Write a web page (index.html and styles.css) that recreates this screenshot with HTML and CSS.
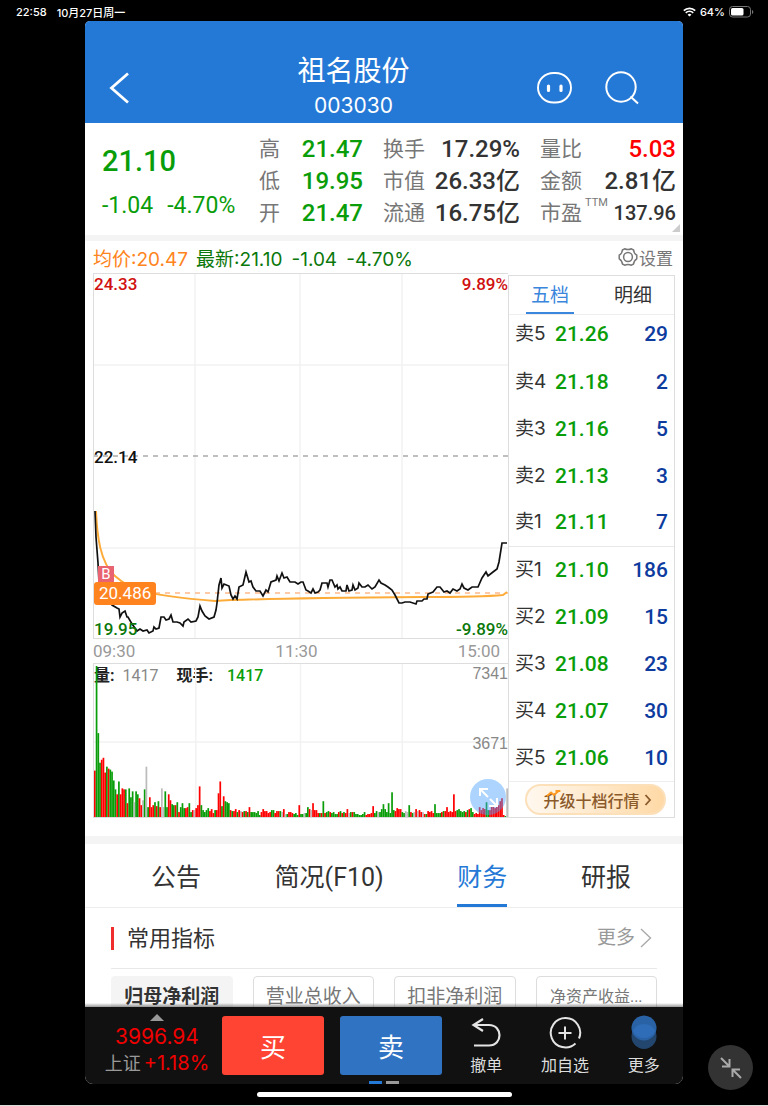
FILE: index.html
```html
<!DOCTYPE html>
<html lang="zh-CN">
<head>
  <meta charset="UTF-8">
  <title>祖名股份 003030</title>
  <meta name="viewport" content="width=device-width, initial-scale=1.0">
  <link rel="stylesheet" href="styles.css">
</head>
<body>
<div class="statusbar">
  <span>22:58</span>
  <span class="date">10月27日周一</span>
  <svg class="wifi" width="13" height="10" viewBox="0 0 13 10" fill="none" stroke="#fff" stroke-width="1.7">
    <path d="M0.8 3.6a8.2 8.2 0 0 1 11.4 0M2.8 5.8a5.2 5.2 0 0 1 7.4 0"/>
    <path d="M6.5 9.6L4.6 7.7a2.7 2.7 0 0 1 3.8 0z" fill="#fff" stroke="none"/>
  </svg>
  <span class="percent">64%</span>
  <svg width="25" height="12" viewBox="0 0 25 12">
    <rect x="0.5" y="0.5" width="21" height="10.5" rx="3" fill="none" stroke="#777"/>
    <rect x="2" y="2" width="12.5" height="7.5" rx="1.5" fill="#fff"/>
    <path d="M23 4v4q1.3-.6 1.3-2T23 4z" fill="#777"/>
  </svg>
</div>

<div class="app">
  <header>
    <a href="#" class="back" aria-label="返回">
      <svg width="24" height="32" viewBox="0 0 24 32" fill="none" stroke="#fff" stroke-width="2.8"><path d="M20 1.500L3.500 16 20 30.500"/></svg>
    </a>
    <div class="title">
      <h1>祖名股份</h1>
      <p>003030</p>
    </div>
    <nav class="tools">
      <a href="#" aria-label="助手">
        <svg width="36" height="32" viewBox="0 0 36 32" fill="none" stroke="#fff">
          <rect x="1" y="1" width="33" height="29.5" rx="15.5" ry="14.7" stroke-width="1.9"/>
          <path d="M11.5 14v4.500M24 14v4.500" stroke-width="3.2" stroke-linecap="round"/>
        </svg>
      </a>
      <a href="#" aria-label="搜索">
        <svg width="36" height="36" viewBox="0 0 36 36" fill="none" stroke="#fff" stroke-width="2">
          <circle cx="17" cy="17" r="14.7"/><path d="M26.5 26.5l7.5 7"/>
        </svg>
      </a>
    </nav>
  </header>

  <section class="quote">
    <div class="price">
      <strong>21.10</strong>
      <p><span>-1.04</span><span>-4.70%</span></p>
    </div>
    <dl class="stats">
      <div><dt>高</dt><dd class="down">21.47</dd></div>
      <div><dt>低</dt><dd class="down">19.95</dd></div>
      <div><dt>开</dt><dd class="down">21.47</dd></div>
    </dl>
    <dl class="stats">
      <div><dt>换手</dt><dd>17.29%</dd></div>
      <div><dt>市值</dt><dd>26.33亿</dd></div>
      <div><dt>流通</dt><dd>16.75亿</dd></div>
    </dl>
    <dl class="stats">
      <div><dt>量比</dt><dd class="up">5.03</dd></div>
      <div><dt>金额</dt><dd>2.81亿</dd></div>
      <div><dt>市盈<sup>TTM</sup></dt><dd class="small">137.96</dd></div>
    </dl>
  </section>

  <section class="market">
    <div class="info">
      <span class="avg">均价:20.47</span>
      <p class="last"><span>最新:21.10</span><span>-1.04</span><span>-4.70%</span></p>
      <a href="#" class="settings">
        <svg width="20" height="20" viewBox="0 0 20 20" fill="none" stroke="#777" stroke-width="1.5" stroke-linejoin="round">
          <path d="M6.6 1.8Q10 3.4 13.4 1.8L15.6 3Q15.8 6.4 18.8 8.2V11.8Q15.8 13.6 15.6 17L13.4 18.2Q10 16.6 6.6 18.2L4.4 17Q4.2 13.6 1.2 11.8V8.2Q4.2 6.4 4.4 3z"/>
          <circle cx="10" cy="10" r="4.4"/>
        </svg>设置
      </a>
    </div>

    <div class="board">
      <div class="charts">
        <div class="trend">
          <svg viewBox="1 1 414 364" preserveAspectRatio="none">
            <path class="grid" d="M0 92H415M0 275H415M102 0V366M207 0V366M309 0V366"/>
            <path class="mid" d="M0 183H415"/>
            <path class="cost" d="M62 320H415"/>
            <path class="avgline" d="M3 238C4 262 7 290 22 303S48 322 122 328C150 326 207 325 330 324Q390 324 410 322L414 319"/>
            <polyline class="priceline" points="2,238 3,264 5,290 6,309 12,322 19,332 24,335 26,336 27,344 29,340 32,338 34,344 35,344 39,351 42,355 44,358 47,356 50,358 54,357 56,360 60,358 61,354 63,356 66,355 68,344 71,344 73,347 76,346 78,342 80,349 84,349 87,350 90,353 91,349 95,346 98,349 103,348 105,344 107,333 109,338 112,343 116,346 121,344 123,337 124,330 126,312 128,305 129,315 131,311 136,313 138,322 140,326 142,323 144,326 146,314 150,312 153,299 156,309 158,308 160,314 163,318 167,318 170,323 173,317 175,319 178,309 183,307 184,303 186,308 189,300 191,305 194,304 197,309 202,309 205,311 208,309 210,309 213,317 215,318 218,320 220,316 222,320 225,319 227,317 229,310 234,310 235,314 237,307 239,307 242,314 244,312 245,316 247,314 249,318 253,318 254,312 256,318 259,317 260,312 262,317 265,315 266,310 269,314 272,314 275,312 279,316 282,314 286,307 288,310 292,312 295,314 299,317 302,322 306,330 309,330 312,329 317,329 323,331 324,328 329,328 331,326 334,326 335,321 340,319 344,314 347,314 351,319 354,318 357,320 360,316 364,318 367,316 369,311 371,315 375,317 379,314 385,314 389,305 393,299 395,303 400,299 404,296 406,289 409,270 414,270"/>
          </svg>
          <span class="tick top left red">24.33</span>
          <span class="tick top right red">9.89%</span>
          <span class="tick middle left">22.14</span>
          <span class="tick bottom left green">19.95</span>
          <span class="tick bottom right green">-9.89%</span>
          <span class="buy-mark">B</span>
          <span class="cost-tag">20.486</span>
        </div>
        <div class="times"><span>09:30</span><span>11:30</span><span>15:00</span></div>
        <div class="volume">
          <p class="legend"><b>量:</b><span>1417</span><b class="now">现手:</b><strong>1417</strong></p>
          <svg viewBox="0 0 415 155" preserveAspectRatio="none">
            <path class="grid" d="M0 79H415M102 0V155M207 0V155M309 0V155"/>
            <svg id="bars" viewBox="0 0 241 155" width="415" height="155" preserveAspectRatio="none"></svg>
          </svg>
          <span class="scale max">7341</span>
          <span class="scale half">3671</span>
          <button type="button" class="expand" aria-label="放大">
            <svg width="36" height="36" viewBox="0 0 36 36" fill="none" stroke="#fff" stroke-width="2">
              <path d="M10 17V10h8M10 10l8 8M27 19v8h-8M27 27l-7-7"/>
            </svg>
          </button>
        </div>
      </div>

      <aside class="book">
        <nav class="book-tabs">
          <a href="#" class="active">五档</a>
          <a href="#">明细</a>
        </nav>
        <table>
          <tbody>
            <tr><th scope="row">卖5</th><td>21.26</td><td>29</td></tr>
            <tr><th scope="row">卖4</th><td>21.18</td><td>2</td></tr>
            <tr><th scope="row">卖3</th><td>21.16</td><td>5</td></tr>
            <tr><th scope="row">卖2</th><td>21.13</td><td>3</td></tr>
            <tr><th scope="row">卖1</th><td>21.11</td><td>7</td></tr>
          </tbody>
          <tbody class="bids">
            <tr><th scope="row">买1</th><td>21.10</td><td>186</td></tr>
            <tr><th scope="row">买2</th><td>21.09</td><td>15</td></tr>
            <tr><th scope="row">买3</th><td>21.08</td><td>23</td></tr>
            <tr><th scope="row">买4</th><td>21.07</td><td>30</td></tr>
            <tr><th scope="row">买5</th><td>21.06</td><td>10</td></tr>
          </tbody>
        </table>
        <div class="upgrade-box">
          <button type="button" class="upgrade">
            <svg class="spark" width="15" height="8" viewBox="0 0 15 8" fill="none" stroke="#ff9a1f" stroke-width="1.8"><path d="M1 6l4-3.500 3 2.500 4.500-4M9.500 1H13.500v1"/></svg>
            升级十档行情
            <svg width="8" height="12" viewBox="0 0 8 12" fill="none" stroke="#8b5a2b" stroke-width="1.8"><path d="M1.500 1l4.500 5-4.500 5"/></svg>
          </button>
        </div>
      </aside>
    </div>
  </section>

  <section class="more-info">
    <nav class="tabs">
      <a href="#">公告</a>
      <a href="#">简况(F10)</a>
      <a href="#" class="active">财务</a>
      <a href="#">研报</a>
    </nav>
    <div class="finance">
      <div class="finance-head">
        <h2>常用指标</h2>
        <a href="#">更多
          <svg width="12" height="20" viewBox="0 0 12 20" fill="none" stroke="#aaa" stroke-width="1.4"><path d="M1 1l9.500 9L1 19"/></svg>
        </a>
      </div>
      <div class="chips">
        <button type="button" class="active">归母净利润</button>
        <button type="button">营业总收入</button>
        <button type="button">扣非净利润</button>
        <button type="button" class="long">净资产收益...</button>
      </div>
    </div>
  </section>

  <footer class="dock">
    <div class="dock-row">
      <a href="#" class="index">
        <i class="caret"></i>
        <span class="value">3996.94</span>
        <span class="change"><em>上证</em>+1.18%</span>
      </a>
      <button type="button" class="trade buy">买</button>
      <button type="button" class="trade sell">卖</button>
      <nav class="actions">
        <a href="#">
          <svg width="32" height="36" viewBox="0 0 32 36" fill="none" stroke="#e4e4e4" stroke-width="2.200">
            <path d="M13 5L3.500 11l9.500 6M3.500 11h15.500c14 0 14 20.500 0 20.500H4"/>
          </svg>
          撤单
        </a>
        <a href="#">
          <svg width="36" height="36" viewBox="0 0 36 36" fill="none" stroke="#e4e4e4" stroke-width="2">
            <path d="M32 24.500A14.700 14.700 0 1 0 28.500 29.500M18 12.500v13M11.500 19h13"/>
          </svg>
          加自选
        </a>
        <a href="#">
          <svg width="28" height="36" viewBox="0 0 28 36">
            <circle cx="14" cy="22.500" r="12.500" fill="#23466e"/>
            <circle cx="14" cy="14" r="12.500" fill="#2a62a6"/>
            <path d="M2.800 17a12.500 12.500 0 0 1 22.400 0a12.500 12.500 0 0 1-22.400 0z" fill="#2f6db8"/>
          </svg>
          更多
        </a>
      </nav>
    </div>
    <div class="pager"><i class="on"></i><i></i></div>
  </footer>
</div>

<div class="home"><i></i></div>

<button type="button" class="shrink" aria-label="缩小">
  <svg width="22" height="22" viewBox="0 0 22 22" fill="none" stroke="#aaa" stroke-width="2">
    <path d="M1 1l8.500 8.500M9.500 2v7.500H2M21 21l-8.500-8.500M12.500 20v-7.500H20"/>
  </svg>
</button>

<script src="volume.js"></script>
</body>
</html>
```
FILE: styles.css
```css
* {
  box-sizing: border-box;
}
html, body {
  margin: 0;
  padding: 0;
  background: #000;
}
body {
  height: 100vh;
  display: flex;
  flex-direction: column;
  overflow: hidden;
  color: #333;
  font-family: Roboto, "Noto Sans CJK SC", sans-serif;
}
a {
  color: inherit;
  text-decoration: none;
}
button {
  border: 0;
  padding: 0;
  font-family: inherit;
  cursor: pointer;
}
h1, h2, p, dl, dd {
  margin: 0;
}
svg {
  display: block;
}

/* status bar */
.statusbar {
  display: flex;
  align-items: center;
  flex: none;
  height: 21px;
  padding: 2px 14px 0 16px;
  color: #fff;
  font-family: Inter, "Noto Sans CJK SC", sans-serif;
  font-size: 11px;
  font-weight: 500;
}
.statusbar .date {
  margin-left: 10px;
}
.statusbar .wifi {
  margin-left: auto;
}
.statusbar .percent {
  margin: 0 4px;
}

/* app window */
.app {
  flex: 1;
  min-height: 0;
  display: flex;
  flex-direction: column;
  margin: 0 85px;
  background: #fff;
  border-radius: 5px 5px 8px 8px;
  overflow: hidden;
}
header {
  flex: none;
  display: flex;
  align-items: center;
  padding: 32px 43px 0 0;
  background: #2579d6;
  color: #fff;
}
.back {
  width: 99px;
  padding-left: 23px;
}
.title {
  flex: 1;
  text-align: center;
  line-height: 34px;
  padding-top: 2px;
}
.title h1 {
  font-size: 28px;
  font-weight: 400;
}
.title p {
  font-family: Inter, sans-serif;
  font-size: 21px;
}
.tools {
  display: flex;
  align-items: center;
  gap: 31px;
  padding-left: 14px;
}

/* quote */
.quote {
  flex: none;
  position: relative;
  display: grid;
  grid-template-columns: 157px 124fr 157fr 136fr;
  height: 118px;
  padding: 10px 7px 6px 17px;
  border-bottom: 6px solid #f4f4f4;
}
.quote::after {
  content: "";
  position: absolute;
  right: 3px;
  bottom: 3px;
  border-left: 8px solid transparent;
  border-bottom: 8px solid #ccc;
}
.price {
  color: #0a9d0a;
  padding-top: 5px;
}
.price strong {
  display: block;
  font-size: 29px;
  font-weight: 500;
  line-height: 46px;
}
.price p {
  display: flex;
  gap: 14px;
  font-size: 23px;
  line-height: 44px;
}
.stats {
  margin-right: 20px;
}
.stats:last-child {
  margin-right: 0;
}
.stats div {
  display: flex;
  justify-content: space-between;
  white-space: nowrap;
  line-height: 32px;
}
.stats dt {
  color: #777;
  font-size: 21px;
}
.stats dd {
  font-size: 24px;
  font-weight: 500;
}
.stats .small {
  font-size: 20px;
}
.stats sup {
  margin-left: 3px;
  font-size: 11px;
  line-height: 0;
  vertical-align: 14px;
}
.down {
  color: #0a9d0a;
}
.up {
  color: #f00;
}

/* chart and order book */
.market {
  flex: none;
  padding: 0 8px 18px;
  border-bottom: 8px solid #f4f4f4;
}
.info {
  display: flex;
  align-items: center;
  gap: 8px;
  height: 32px;
  font-family: Inter, "Noto Sans CJK SC", sans-serif;
  font-size: 19px;
}
.avg {
  color: #ff8420;
}
.last {
  display: flex;
  align-items: baseline;
  gap: 9px;
  color: #0b780b;
}
.settings {
  display: flex;
  align-items: center;
  gap: 1px;
  margin-left: auto;
  padding-right: 2px;
  color: #777;
  font-size: 17px;
}
.board {
  display: grid;
  grid-template-columns: 1fr 167px;
}
.charts {
  min-width: 0;
}
.trend {
  position: relative;
  height: 366px;
  border: 1px solid #ddd;
  border-right: 0;
}
.trend svg {
  width: 100%;
  height: 100%;
}
.grid {
  fill: none;
  stroke: #f2f2f2;
  stroke-width: 1.5;
}
.mid {
  stroke: #aaa;
  stroke-width: 1.5;
  stroke-dasharray: 5 5;
}
.cost {
  stroke: #ffb98a;
  stroke-width: 1.5;
  stroke-dasharray: 5 5;
}
.avgline {
  fill: none;
  stroke: #fdac3a;
  stroke-width: 2;
}
.priceline {
  fill: none;
  stroke: #111;
  stroke-width: 1.7;
}
.tick {
  position: absolute;
  font-size: 17px;
  font-weight: 500;
  line-height: 20px;
  color: #111;
}
.tick.top { top: 0; }
.tick.middle { top: 173px; }
.tick.bottom { bottom: -1px; }
.tick.left { left: 0; }
.tick.right { right: 0; }
.tick.red { color: #d01010; }
.tick.green { color: #0b780b; }
.buy-mark {
  position: absolute;
  left: 4px;
  top: 292px;
  width: 16px;
  height: 17px;
  background: #e96370;
  color: #fff;
  font-size: 15px;
  line-height: 17px;
  text-align: center;
}
.cost-tag {
  position: absolute;
  left: 0;
  top: 308px;
  padding: 0 5px;
  border-radius: 3px;
  background: #ff8420;
  color: #fff;
  font-size: 17px;
  line-height: 23px;
}
.times {
  display: flex;
  justify-content: space-between;
  padding-right: 8px;
  color: #999;
  font-size: 17px;
  line-height: 24px;
}
.volume {
  position: relative;
  height: 155px;
  border: solid #ddd;
  border-width: 1px 0 1px 1px;
}
.volume > svg {
  position: relative;
  width: 100%;
  height: 100%;
}
.legend {
  position: absolute;
  left: 0;
  top: 0;
  display: flex;
  color: #888;
  font-size: 16px;
  line-height: 23px;
}
.legend b {
  margin-right: 8px;
  color: #222;
}
.legend .now {
  margin: 0 14px 0 18px;
}
.legend strong {
  color: #0a9d0a;
  font-weight: 500;
}
.scale {
  position: absolute;
  right: 0;
  color: #888;
  font-family: "Liberation Sans", sans-serif;
  font-size: 16px;
  line-height: 18px;
}
.scale.max { top: 1px; }
.scale.half { top: 71px; }
.expand {
  position: absolute;
  right: 2px;
  bottom: 2px;
  border-radius: 50%;
  background: rgba(70, 160, 255, 0.45);
}

.book {
  margin-top: 2px;
  border: 1px solid #ddd;
  font-family: Inter, "Noto Sans CJK SC", sans-serif;
}
.book-tabs {
  display: flex;
  justify-content: space-between;
  padding: 0 17px;
  border-bottom: 1px solid #eee;
  font-size: 19px;
  line-height: 40px;
}
.book-tabs a {
  width: 48px;
  height: 38px;
  border-bottom: 2px solid transparent;
  text-align: center;
}
.book-tabs .active {
  border-color: #3a86dc;
  color: #3a86dc;
}
.book table {
  width: 100%;
  border-collapse: collapse;
}
.book th, .book td {
  height: 47px;
  padding: 0;
  line-height: 28px;
}
.book tbody:first-child tr:first-child > * {
  height: 43px;
  padding-bottom: 5px;
}
.book th {
  width: 46px;
  padding-left: 6px;
  font-size: 19px;
  font-weight: 400;
  text-align: left;
}
.book td {
  color: #0a9d0a;
  font-family: Roboto, sans-serif;
  font-size: 21px;
  font-weight: 500;
}
.book td:last-child {
  padding-right: 6px;
  color: #0d3b9e;
  text-align: right;
}
.bids {
  border-top: 1px solid #e8e8e8;
}
.upgrade-box {
  padding: 2px 8px 2px 16px;
  border-top: 1px solid #eee;
}
.upgrade {
  position: relative;
  display: flex;
  align-items: center;
  justify-content: center;
  gap: 4px;
  width: 100%;
  height: 31px;
  padding-left: 4px;
  border: 2px solid #fce0ba;
  border-radius: 16px;
  background: linear-gradient(90deg, #fff8ef, #ffd9a6);
  color: #8b5a2b;
  font-size: 16px;
  font-weight: 500;
}
.spark {
  position: absolute;
  left: 19px;
  top: 4px;
}

/* finance tabs */
.more-info {
  flex: 1;
  min-height: 0;
  overflow: hidden;
  position: relative;
}
.more-info::after {
  content: "";
  position: absolute;
  left: 0;
  right: 0;
  bottom: 0;
  height: 4px;
  background: linear-gradient(rgba(0, 0, 0, 0), rgba(0, 0, 0, 0.4));
}
.tabs {
  display: flex;
  justify-content: space-between;
  padding: 0 52px 0 66px;
  border-bottom: 1px solid #eee;
  font-size: 25px;
  line-height: 68px;
}
.tabs a {
  height: 63px;
}
.tabs .active {
  border-bottom: 3px solid #2579d6;
  color: #2579d6;
}
.finance {
  padding: 0 26px;
}
.finance-head {
  display: flex;
  align-items: center;
  justify-content: space-between;
  height: 61px;
  border-bottom: 1px solid #e8e8e8;
}
.finance-head h2 {
  padding-left: 13px;
  border-left: 3px solid #f02d2d;
  font-size: 22px;
  font-weight: 400;
  line-height: 23px;
}
.finance-head a {
  display: flex;
  align-items: center;
  gap: 5px;
  padding-right: 5px;
  color: #999;
  font-size: 19px;
  line-height: 20px;
}
.chips {
  display: grid;
  grid-template-columns: repeat(4, 1fr);
  gap: 20px;
  padding-top: 7px;
}
.chips button {
  height: 42px;
  border: 1px solid #ddd;
  border-radius: 4px;
  background: #fff;
  color: #777;
  font-size: 19px;
  line-height: 20px;
  white-space: nowrap;
}
.chips .active {
  border-color: #f4f4f4;
  background: #f4f4f4;
  color: #333;
  font-weight: 700;
}
.chips .long {
  font-size: 16px;
}

/* bottom dock */
.dock {
  flex: none;
  background: #111;
}
.dock-row {
  display: flex;
  align-items: center;
  padding-top: 7px;
}
.index {
  width: 137px;
  padding-left: 7px;
  display: flex;
  flex-direction: column;
  align-items: center;
  color: #f00000;
  font-family: Inter, "Noto Sans CJK SC", sans-serif;
  font-size: 21px;
  line-height: 26px;
}
.caret {
  margin-bottom: 3px;
  border: solid transparent;
  border-width: 0 7px 7px;
  border-bottom-color: #999;
}
.index .change {
  font-size: 20px;
}
.index em {
  margin-right: 3px;
  color: #999;
  font-size: 18px;
  font-style: normal;
}
.trade {
  width: 102px;
  height: 59px;
  margin-right: 16px;
  border-radius: 3px;
  color: #fff;
  font-size: 26px;
}
.buy {
  background: #ff4433;
}
.sell {
  margin-right: 5px;
  background: #3173c3;
}
.actions {
  flex: 1;
  display: grid;
  grid-template-columns: repeat(3, 1fr);
  color: #ddd;
  font-size: 16px;
  line-height: 22px;
}
.actions a {
  display: flex;
  flex-direction: column;
  align-items: center;
  gap: 5px;
}
.pager {
  display: flex;
  justify-content: center;
  gap: 4px;
  padding-top: 4px;
}
.pager i {
  width: 13px;
  height: 3px;
  background: #999;
}
.pager .on {
  background: #2579d6;
}

.home {
  flex: none;
  height: 22px;
  padding-top: 8px;
  border-bottom: 1px solid #ddd;
}
.home i {
  display: block;
  width: 255px;
  height: 5px;
  margin: 0 auto;
  border-radius: 3px;
  background: #fff;
}
.shrink {
  position: fixed;
  right: 15px;
  bottom: 16px;
  display: flex;
  align-items: center;
  justify-content: center;
  width: 45px;
  height: 45px;
  border-radius: 50%;
  background: #333;
}
```
FILE: volume.js
```js
// one entry per minute: g = down, r = up, k = flat, followed by the bar height
const volume = `
r47 g153 g85 g55 r58 r60 r45 g51 r49 g48 g46 g37 g28 r23 g36 r23 r29 r28 g28 r14
g29 g20 g26 k15 g26 g23 r19 r12 k17 g28 k51 g10 r20 r10 r12 g15 r11 g16 r10 k29
k10 g26 g10 r23 r17 g13 g12 r12 g15 r5 g10 g14 g9 r9 r10 g14 g5 r7 k7 r9
r12 r31 g12 g7 g5 g7 g9 r6 r8 r4 g7 r7 r24 r36 g11 r21 g16 g15 g14 r7
g6 r6 r8 g5 r7 k6 r5 g6 r6 g5 r10 g5 g5 g5 g4 g6 g2 r5 r8 r6
r6 r4 r5 g7 g7 r4 r6 r6 g6 k5 r8 k3 g3 r5 r5 r4 g3 g4 g2 r12
g3 g3 k4 g4 g10 r8 k7 r14 r7 r7 r4 g4 r4 g16 r4 g5 g6 r5 g4 g5
g3 g3 r5 g6 r4 g5 r4 r8 k4 g5 r5 g5 g3 g3 g2 g2 g3 g5 r2 r3
r3 r4 r11 g4 g6 k5 g5 g8 g13 g8 g5 g14 g4 g25 g7 r6 r9 r8 r8 g5
g4 k6 k5 g12 r5 g4 k5 r8 k6 r7 r5 k5 r3 g3 r6 r5 r6 r4 g13 g4
g4 g4 r5 g6 r6 r10 r5 r6 r5 r23 r6 g7 g8 g6 g5 g6 r5 g7 r8 g9
g5 r3 r4 r3 r10 r7 r9 r8 g15 g7 r7 r11 r12 r9 r11 r12 r16 r19 r2 g1
k29
`.trim().split(/\s+/);

const colors = { g: '#0a9d0a', r: '#ff0000', k: '#bbbbbb' };

document.getElementById('bars').innerHTML = volume.map((item, i) => {
  const h = Number(item.slice(1));
  return `<rect x="${i}" y="${155 - h}" width="1" height="${h}" fill="${colors[item[0]]}"/>`;
}).join('');
```
